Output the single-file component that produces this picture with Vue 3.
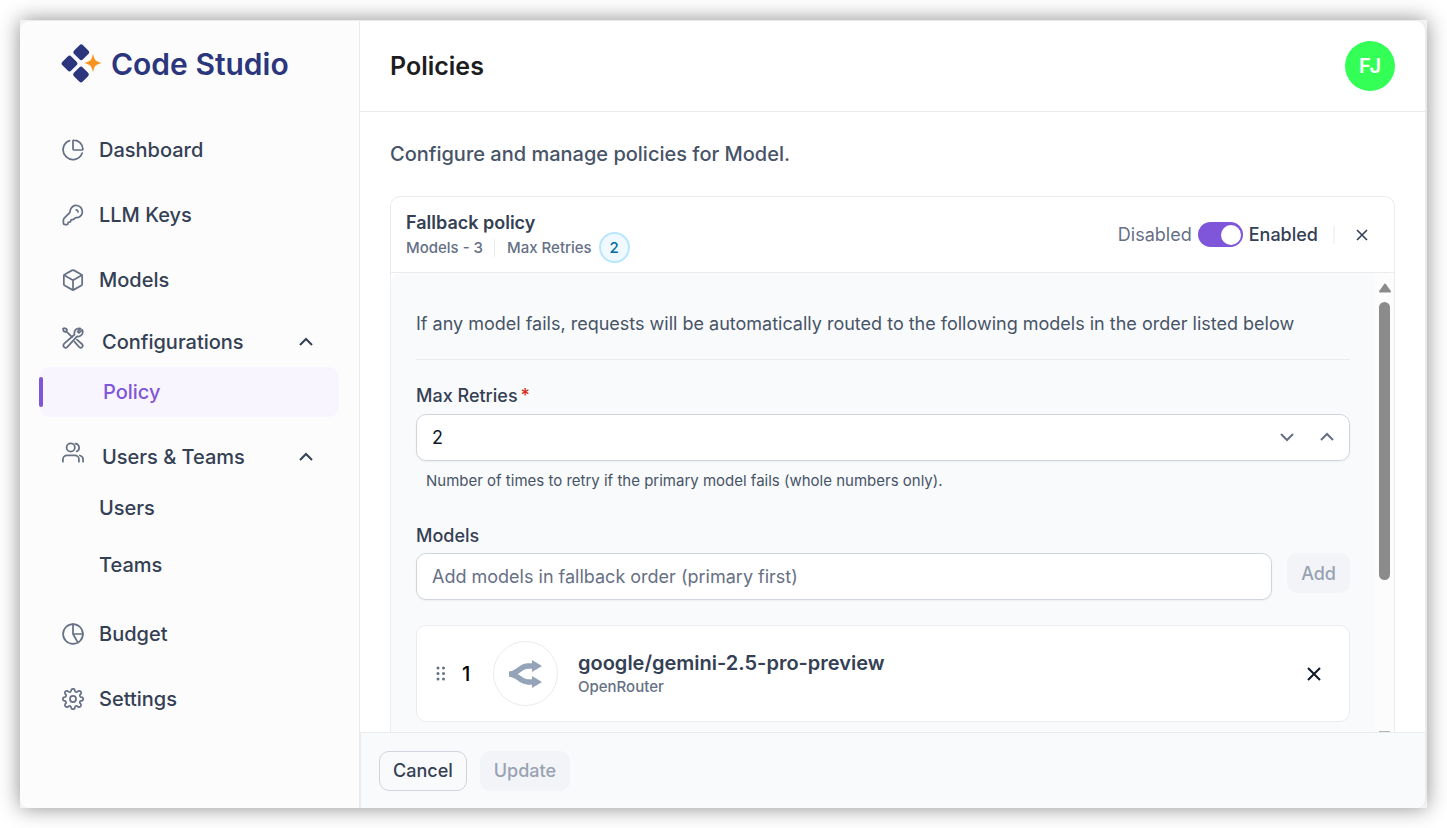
<script setup>
import { ref } from 'vue'

const retries = ref(2)
const enabled = ref(true)
const newModel = ref('')
const models = ref([{ name: 'google/gemini-2.5-pro-preview', provider: 'OpenRouter' }])
</script>

<template>
  <div class="stage">
    <div class="window">
      <div class="app">
        <aside class="sidebar">
          <a href="#" class="brand">
            <svg width="42" height="40" viewBox="0 0 42 40" aria-hidden="true">
              <g fill="#2c367d">
                <rect x="14" y="2" width="12.500" height="12.500" rx="2.500" transform="rotate(45 20.250 8.250)" />
                <rect x="2.250" y="13.250" width="12.500" height="12.500" rx="2.500" transform="rotate(45 8.500 19.500)" />
                <rect x="13.750" y="24.250" width="12.500" height="12.500" rx="2.500" transform="rotate(45 20 30.500)" />
              </g>
              <path fill="#f7931e" d="M32 9.500C33.300 16 34.500 17.600 41 19C34.500 20.400 33.300 22 32 28.500C30.700 22 29.500 20.400 23 19C29.500 17.600 30.700 16 32 9.500Z" />
            </svg>
            <span>Code Studio</span>
          </a>

          <nav class="nav">
            <a href="#" class="item">
              <svg class="icon" viewBox="0 0 24 24"><path d="M22 15.300A10.700 10.700 0 1 1 8.200 1.700" /><path d="M13 1.200a10 10 0 0 1 9.800 9.800.9.900 0 0 1-.9 1H13a1 1 0 0 1-1-1V2.100a.9.900 0 0 1 1-.9Z" /></svg>
              <span>Dashboard</span>
            </a>
            <a href="#" class="item">
              <svg class="icon" viewBox="0 0 24 24"><path d="M15.500 15a6.700 6.700 0 1 0-6.600-7.700c-.1.800.1 1.500-.5 2.100L2.700 15.200c-.8.800-1.200 1.400-1.200 2.500v2.800c0 1.300.7 2 2 2h1.700c.8 0 1.300-.5 1.300-1.300s.5-1.400 1.300-1.400h.4c.8 0 1.300-.5 1.300-1.300s.5-1.400 1.300-1.400h.6c1.200 0 1.900-.8 2.700-1.600.8-.8 1.500-.5 2.600-.5Z" /><path d="M15.500 6.500a2.500 2.500 0 0 1 2 2" /></svg>
              <span>LLM Keys</span>
            </a>
            <a href="#" class="item">
              <svg class="icon" viewBox="0 0 24 24"><path d="M22 7.500v9c0 .7-.3 1.200-.9 1.500l-8 4.500c-.7.400-1.500.4-2.200 0L2.900 18c-.6-.3-.9-.8-.9-1.500v-9c0-.7.300-1.200.9-1.500l8-4.500c.7-.4 1.500-.4 2.200 0l8 4.500c.6.300.9.800.9 1.500Z" /><path d="m2.500 6.800 9.500 5.400 9.500-5.400M12 12.200v10.500" /></svg>
              <span>Models</span>
            </a>

            <div class="group tight">
              <button type="button" class="item group-head">
                <svg class="icon raised" viewBox="0 0 24 24"><path d="m5 5 6 6M5.500 3.200 3.800 5.500 2 4.800 1 2.200l1.200-1 2.600.8Z" /><path d="m18.500 6.500 3.600-3.300c1.700 3.800-1.300 8-5.800 7.100L5.700 22c-2.300 2-5.400-1-3.600-3.500L13.700 8.200C12.600 4 16 .5 20.300 1.700L17 5Z" /><path d="m13.500 16 5.300 6c2.300 2 5-.9 3.200-3.200l-5.700-5" /></svg>
                <span>Configurations</span>
                <svg class="chevron" viewBox="0 0 16 10"><path d="m2 8 6-6 6 6" /></svg>
              </button>
              <a href="#" class="item sub active" aria-current="page">Policy</a>
            </div>

            <div class="group">
              <button type="button" class="item group-head">
                <svg class="icon raised" viewBox="0 0 24 24"><circle cx="9.500" cy="6" r="4.500" /><path d="M14.500 1.700a4.500 4.500 0 0 1 1.500 8.600M1 21.500V19a4.500 4.500 0 0 1 4.500-4.500H14a4.500 4.500 0 0 1 4.500 4.500v2.500M19.500 14.700a4.500 4.500 0 0 1 3.500 4.500v2.300" /></svg>
                <span>Users &amp; Teams</span>
                <svg class="chevron" viewBox="0 0 16 10"><path d="m2 8 6-6 6 6" /></svg>
              </button>
              <div class="children">
                <a href="#" class="item sub">Users</a>
                <a href="#" class="item sub">Teams</a>
              </div>
            </div>

            <a href="#" class="item last-section">
              <svg class="icon" viewBox="0 0 24 24"><circle cx="12" cy="12" r="10.800" /><path d="M12 1.200V12h10.800M12 12l5.400 9.400" /></svg>
              <span>Budget</span>
            </a>
            <a href="#" class="item">
              <svg class="icon" viewBox="0 0 24 24"><circle cx="12" cy="12" r="3.300" /><path d="M19.500 14.900a1.600 1.600 0 0 0 .3 1.800 2.200 2.200 0 1 1-3 3.100 1.700 1.700 0 0 0-2.700 1.200 2.100 2.100 0 0 1-4.200 0 1.700 1.700 0 0 0-2.700-1.200 2.200 2.200 0 1 1-3-3.100A1.700 1.700 0 0 0 3 14.100a2.100 2.100 0 0 1 0-4.200 1.700 1.700 0 0 0 1.200-2.700 2.200 2.200 0 1 1 3-3A1.700 1.700 0 0 0 9.900 3a2.100 2.100 0 0 1 4.200 0 1.700 1.700 0 0 0 2.700 1.200 2.200 2.200 0 1 1 3 3A1.700 1.700 0 0 0 21 9.900a2.100 2.100 0 0 1 0 4.200 1.600 1.600 0 0 0-1.500.8Z" /></svg>
              <span>Settings</span>
            </a>
          </nav>
        </aside>

        <main class="main">
          <header class="topbar">
            <h1>Policies</h1>
            <button type="button" class="avatar">FJ</button>
          </header>

          <div class="content">
            <p class="lead">Configure and manage policies for Model.</p>

            <section class="card">
              <div class="card-head">
                <div class="summary">
                  <h2>Fallback policy</h2>
                  <div class="meta">
                    <span>Models - 3</span>
                    <span class="bar"></span>
                    <span>Max Retries</span>
                    <span class="count">2</span>
                  </div>
                </div>
                <div class="state">
                  <label for="enabled" class="off">Disabled</label>
                  <input id="enabled" v-model="enabled" type="checkbox" role="switch" class="switch" />
                  <label for="enabled" class="on">Enabled</label>
                  <span class="bar"></span>
                  <button type="button" class="close" aria-label="Close">
                    <svg width="12" height="12" viewBox="0 0 12 12"><path d="m1 1 10 10M11 1 1 11" /></svg>
                  </button>
                </div>
              </div>

              <div class="card-body">
                <div class="form">
                  <p class="intro">If any model fails, requests will be automatically routed to the following models in the order listed below</p>

                  <label for="retries" class="label">Max Retries<span class="required">*</span></label>
                  <div class="stepper">
                    <input id="retries" v-model.number="retries" type="number" min="0" />
                    <button type="button" aria-label="Decrease" @click="retries--">
                      <svg width="16" height="10" viewBox="0 0 16 10"><path d="m2 2 6 6 6-6" /></svg>
                    </button>
                    <button type="button" aria-label="Increase" @click="retries++">
                      <svg width="16" height="10" viewBox="0 0 16 10"><path d="m2 8 6-6 6 6" /></svg>
                    </button>
                  </div>
                  <p class="hint">Number of times to retry if the primary model fails (whole numbers only).</p>

                  <label for="model" class="label">Models</label>
                  <div class="add-row">
                    <input id="model" v-model="newModel" type="text" placeholder="Add models in fallback order (primary first)" />
                    <button type="button" class="btn muted" disabled>Add</button>
                  </div>

                  <div v-for="(m, i) in models" :key="m.name" class="model">
                    <svg class="grip" width="10" height="16" viewBox="0 0 10 16" aria-hidden="true">
                      <circle cx="2" cy="2" r="1.500" /><circle cx="7.500" cy="2" r="1.500" />
                      <circle cx="2" cy="7.500" r="1.500" /><circle cx="7.500" cy="7.500" r="1.500" />
                      <circle cx="2" cy="13" r="1.500" /><circle cx="7.500" cy="13" r="1.500" />
                    </svg>
                    <span class="order">{{ i + 1 }}</span>
                    <span class="logo">
                      <svg width="34" height="30" viewBox="0 0 34 30" aria-hidden="true">
                        <path d="M0 15C9 15 11 7 19 7H24M0 15C9 15 11 23 19 23H24" fill="none" stroke="#94a3b8" stroke-width="5.500" />
                        <path d="M23 1 33 7 23 13ZM23 17 33 23 23 29Z" fill="#94a3b8" />
                      </svg>
                    </span>
                    <div class="model-text">
                      <strong>{{ m.name }}</strong>
                      <span>{{ m.provider }}</span>
                    </div>
                    <button type="button" class="remove" aria-label="Remove model">
                      <svg width="14" height="14" viewBox="0 0 14 14"><path d="m1 1 12 12M13 1 1 13" /></svg>
                    </button>
                  </div>
                </div>

                <div class="track" aria-hidden="true">
                  <svg width="12" height="10" viewBox="0 0 12 10"><path d="M6 1.500 11 8.500H1Z" fill="#8b8b8b" stroke="#8b8b8b" stroke-width="2" stroke-linejoin="round" /></svg>
                  <div class="thumb"></div>
                  <div class="track-end"></div>
                </div>
              </div>
            </section>
          </div>

          <footer class="actions">
            <button type="button" class="btn outline">Cancel</button>
            <button type="button" class="btn muted" disabled>Update</button>
          </footer>
        </main>
      </div>
    </div>
  </div>
</template>

<style>
body {
  background: #fff;
}
</style>

<style scoped>
* {
  box-sizing: border-box;
}
.stage {
  height: 100vh;
  padding: 20px;
  overflow: hidden;
  font-family: Inter, "Liberation Sans", sans-serif;
  font-size: 18px;
  color: #344054;
}
.window {
  height: 100%;
  background: #f3f3f3;
  box-shadow: 0 0 20px rgba(0, 0, 0, 0.45);
}
.app {
  display: flex;
  height: 100%;
  overflow: hidden;
  border: solid #ebebeb;
  border-width: 1px 2px 0 0;
  border-radius: 10px;
  background: #fff;
}
h1, h2, p {
  margin: 0;
}
button, input {
  font: inherit;
  color: inherit;
}
button {
  padding: 0;
  border: 0;
  background: none;
}
a {
  color: inherit;
  text-decoration: none;
}
svg {
  flex: none;
}

.sidebar {
  flex: 0 0 340px;
  padding: 0 20px 0 19px;
  border-right: 1px solid #ebebeb;
  background: #fcfcfc;
}
.brand {
  display: flex;
  align-items: center;
  gap: 8px;
  height: 86px;
  padding-left: 22px;
  font-size: 30px;
  font-weight: 600;
  color: #2c367d;
}
.nav {
  display: flex;
  flex-direction: column;
  gap: 15px;
  padding-top: 18px;
  font-size: 20px;
  font-weight: 500;
}
.item {
  display: flex;
  align-items: center;
  gap: 15px;
  width: 100%;
  height: 50px;
  padding: 0 23px;
  border-radius: 10px;
  text-align: left;
}
.group-head {
  gap: 18px;
}
.group-head span {
  flex: 1;
}
.icon {
  width: 22px;
  height: 22px;
  fill: none;
  stroke: #667085;
  stroke-width: 1.9;
  stroke-linecap: round;
  stroke-linejoin: round;
}
.raised {
  margin-bottom: 8px;
}
.chevron {
  width: 16px;
  height: 10px;
  margin-right: 2px;
  fill: none;
  stroke: #344054;
  stroke-width: 2;
}
.tight {
  margin-top: -3px;
}
.sub {
  padding-left: 60px;
}
.active {
  position: relative;
  padding-left: 64px;
  background: #f9f5ff;
  color: #7f56d9;
}
.active::before {
  content: "";
  position: absolute;
  left: 0;
  top: 10px;
  bottom: 10px;
  width: 4px;
  border-radius: 2px;
  background: #7f56d9;
}
.children {
  display: flex;
  flex-direction: column;
  gap: 7px;
  padding-top: 1px;
}
.last-section {
  margin-top: 4px;
}

.main {
  flex: 1;
  display: flex;
  flex-direction: column;
  min-width: 0;
}
.topbar {
  flex: none;
  display: flex;
  align-items: center;
  justify-content: space-between;
  height: 91px;
  padding: 0 30px;
  border-bottom: 1px solid #ebebeb;
}
h1 {
  font-size: 25px;
  font-weight: 600;
  color: #1d1d1f;
}
.avatar {
  width: 50px;
  height: 50px;
  border-radius: 50%;
  background: #33ff57;
  color: #fff;
  font-size: 20px;
  font-weight: 600;
}
.content {
  flex: 1;
  display: flex;
  flex-direction: column;
  min-height: 0;
  padding: 27px 30px 0;
  overflow: hidden;
}
.lead {
  font-size: 20px;
  line-height: 30px;
  font-weight: 500;
  color: #475467;
}
.card {
  flex: 1;
  display: flex;
  flex-direction: column;
  min-height: 0;
  margin-top: 27px;
  border: 1px solid #eaecf0;
  border-bottom: 0;
  border-radius: 10px 10px 0 0;
}
.card-head {
  flex: none;
  display: flex;
  align-items: center;
  justify-content: space-between;
  height: 76px;
  padding: 0 19px 0 15px;
  border-bottom: 1px solid #eaecf0;
}
.summary {
  padding-top: 6px;
}
h2 {
  font-size: 18px;
  line-height: 20px;
  font-weight: 600;
}
.meta {
  display: flex;
  align-items: center;
  height: 30px;
  font-size: 15px;
  font-weight: 500;
  color: #667085;
}
.bar {
  width: 1px;
  height: 18px;
  margin: 0 12px 0 11px;
  background: #eaecf0;
}
.count {
  display: grid;
  place-items: center;
  width: 31px;
  height: 31px;
  margin-left: 7px;
  border: 2px solid #b9e6fe;
  border-radius: 50%;
  background: #f0f9ff;
  color: #026aa2;
}
.state {
  display: flex;
  align-items: center;
}
.off {
  color: #667085;
}
.on {
  font-weight: 500;
}
.switch {
  appearance: none;
  display: flex;
  width: 45px;
  height: 25px;
  margin: 0 6px;
  padding: 0 2px;
  align-items: center;
  border-radius: 13px;
  background: #d0d5dd;
}
.switch:checked {
  justify-content: flex-end;
  background: #7f56d9;
}
.switch::before {
  content: "";
  width: 20px;
  height: 20px;
  border-radius: 50%;
  background: #fff;
}
.state .bar {
  width: 2px;
  margin: 0 13px 0 15px;
  background: #f2f4f7;
}
.close {
  display: grid;
  place-items: center;
  width: 27px;
  height: 27px;
}
.close svg {
  fill: none;
  stroke: #344054;
  stroke-width: 1.6;
}

.card-body {
  flex: 1;
  display: flex;
  min-height: 0;
  border-radius: 10px 10px 0 0;
  background: #f9fafb;
  overflow: hidden;
}
.form {
  flex: 1;
  min-width: 0;
  padding: 25px;
}
.intro {
  height: 62px;
  padding-top: 13px;
  border-bottom: 1px solid #eaecf0;
  line-height: 26px;
  color: #475467;
}
.label {
  display: block;
  margin-top: 23px;
  padding-bottom: 5px;
  line-height: 26px;
  font-weight: 500;
}
.required {
  margin-left: 3px;
  color: #d92d20;
}
.stepper, .add-row input {
  height: 47px;
  border: 1px solid #d0d5dd;
  border-radius: 10px;
  background: #fff;
  box-shadow: 0 1px 2px rgba(16, 24, 40, 0.05);
}
.stepper {
  display: flex;
  align-items: center;
  padding-right: 2px;
}
.stepper input {
  flex: 1;
  min-width: 0;
  padding: 0 15px;
  border: 0;
  background: none;
  color: #101828;
  appearance: textfield;
}
.stepper input::-webkit-inner-spin-button {
  appearance: none;
}
.stepper button {
  display: grid;
  place-items: center;
  width: 40px;
  height: 40px;
  padding-bottom: 2px;
}
.stepper svg {
  fill: none;
  stroke: #667085;
  stroke-width: 2;
}
.hint {
  padding: 7px 10px 0;
  font-size: 15px;
  line-height: 26px;
  color: #475467;
}
.hint + .label {
  margin-top: 29px;
  padding-bottom: 4px;
}
.add-row {
  display: flex;
  align-items: flex-start;
  gap: 15px;
}
.add-row input {
  flex: 1;
  min-width: 0;
  padding: 0 15px;
}
.add-row input::placeholder {
  color: #667085;
  opacity: 1;
}
.btn {
  flex: none;
  height: 40px;
  padding: 0 14px;
  border-radius: 10px;
  font-weight: 500;
}
.muted {
  background: #f2f4f7;
  color: #98a2b3;
}
.outline {
  padding: 0 13px;
  border: 1px solid #d0d5dd;
}
.model {
  display: flex;
  align-items: center;
  height: 97px;
  margin-top: 25px;
  padding: 0 21px 0 19px;
  border: 1px solid #eaecf0;
  border-radius: 10px;
  background: #fff;
}
.grip {
  fill: #667085;
}
.order {
  width: 22px;
  margin: 0 9px 0 16px;
  font-size: 20px;
  font-weight: 500;
  color: #000;
}
.logo {
  display: grid;
  place-items: center;
  width: 65px;
  height: 65px;
  border: 1px solid #ebebeb;
  border-radius: 50%;
}
.model-text {
  flex: 1;
  display: flex;
  flex-direction: column;
  min-width: 0;
  margin-left: 20px;
}
.model-text strong {
  font-size: 20px;
  line-height: 26px;
  font-weight: 600;
}
.model-text span {
  font-size: 15px;
  line-height: 22px;
  font-weight: 500;
  color: #667085;
}
.remove {
  display: grid;
  place-items: center;
  width: 28px;
  height: 28px;
}
.remove svg {
  fill: none;
  stroke: #101828;
  stroke-width: 2;
}
.track {
  flex: 0 0 19px;
  display: flex;
  flex-direction: column;
  align-items: center;
  padding-top: 10px;
  background: #fcfcfc;
}
.thumb {
  flex: 0 0 62%;
  width: 11px;
  margin-top: 9px;
  border-radius: 6px;
  background: #8b8b8b;
}
.track-end {
  width: 11px;
  height: 1px;
  margin-top: auto;
  background: #b5b5b5;
}

.actions {
  flex: none;
  display: flex;
  align-items: center;
  gap: 13px;
  height: 76px;
  padding: 0 18px;
  border: solid #eaecf0;
  border-width: 1px 0 0 1px;
  background: #f9fafb;
}
</style>
